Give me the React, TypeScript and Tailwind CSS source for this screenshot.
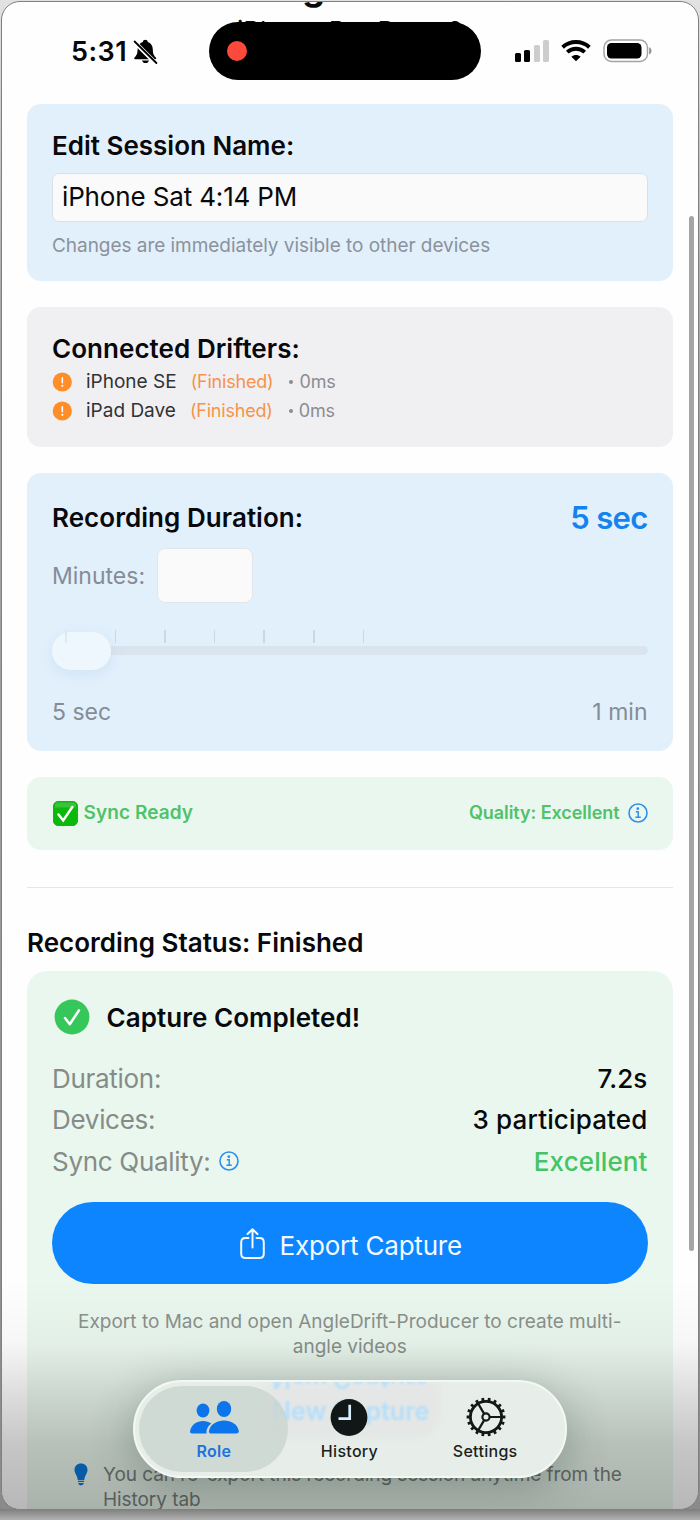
import React from "react";

const drifters = [
  { name: "iPhone SE", state: "(Finished)", offset: "0ms" },
  { name: "iPad Dave", state: "(Finished)", offset: "0ms" },
];

const ticks = [0, 1, 2, 3, 4, 5, 6];
const teeth = Array.from({ length: 18 }, (_, i) => i * 20);

const InfoIcon = () => (
  <svg width="20" height="20" viewBox="0 0 20 20" fill="none" stroke="#2f8fec">
    <circle cx="10" cy="10" r="9" strokeWidth="1.6" />
    <circle cx="9.8" cy="5.700" r="1.4" fill="#2f8fec" stroke="none" />
    <path d="M7.800 8.800h2.400v5.200M7.400 14.300h5.400" strokeWidth="1.5" />
  </svg>
);

const WarningIcon = () => (
  <svg width="20" height="20" viewBox="0 0 20 20">
    <circle cx="10.300" cy="10" r="9.600" fill="#ff8d28" />
    <path d="M10.300 5.800v5" stroke="#fff" strokeWidth="1.600" strokeLinecap="round" />
    <circle cx="10.300" cy="13.800" r="1.100" fill="#fff" />
  </svg>
);

const StatusBar = () => (
  <div className="relative h-[102px]">
    <div className="absolute left-0 right-0 top-[-33px] text-center text-[36px] leading-[36px] font-bold">
      <span className="relative left-[-36.500px]">g</span>
    </div>
    <div className="absolute left-0 right-0 top-[13px] text-center text-[26px] leading-[32px] whitespace-nowrap">
      iPhone Pro Dave 2
    </div>
    <div className="relative flex h-full items-start">
      <div className="ml-[69px] mt-[34px] w-[60px] text-[27px] leading-[32px] font-semibold tracking-[0.5px] whitespace-nowrap">
        5:31
      </div>
      <svg className="ml-[2px] mt-[36px]" width="26" height="28" viewBox="0 0 26 28">
        <path
          d="M12.500 1.800c-1.500 0-2.500.9-2.700 2.200C6.500 5 4.700 7.600 4.600 11.300c-.1 4.400-.8 6-3 8.200-.7.700-.5 1.800.8 1.800h19.600c1.300 0 1.600-1.100.8-1.800-2.200-2.200-2.900-3.800-3-8.200-.1-3.700-1.900-6.300-5-7.300-.2-1.300-1.200-2.200-2.300-2.200zM9 22.500h7c-.5 1.700-1.800 2.600-3.500 2.600S9.500 24.200 9 22.500z"
          fill="#000"
        />
        <path d="M2 4.500l20.500 20.500" stroke="#fff" strokeWidth="4.400" />
        <path d="M1.600 3.500l21.800 21.500" stroke="#000" strokeWidth="1.800" strokeLinecap="round" />
      </svg>
      <div className="ml-[49.500px] mt-[20px] flex h-[57.500px] w-[272.500px] items-center rounded-full bg-black pl-[18px]">
        <div className="h-5 w-5 rounded-full bg-[#fb4a3b]" />
      </div>
      <div className="ml-[33.500px] mt-[38px] flex h-[22px] w-[35px] items-end justify-between">
        <div className="h-[9px] w-[6px] rounded-[1.500px] bg-black" />
        <div className="h-[12px] w-[6px] rounded-[1.500px] bg-black" />
        <div className="h-[17px] w-[6px] rounded-[1.500px] bg-[#cdcdcd]" />
        <div className="h-[22px] w-[6px] rounded-[1.500px] bg-[#cdcdcd]" />
      </div>
      <svg className="ml-[11px] mt-[37px]" width="30" height="23" viewBox="0 0 30 23" fill="none" stroke="#000">
        <path d="M1.600 8.200C9.100 1.300 20.900 1.300 28.400 8.200" strokeWidth="3.900" />
        <path d="M6.300 13.200c4.900-4.600 12.500-4.600 17.400 0" strokeWidth="3.800" />
        <path d="M15 22.300l-4.600-4.600c2.600-2.300 6.600-2.300 9.200 0z" fill="#000" stroke="none" />
      </svg>
      <svg className="ml-[12px] mt-[37px]" width="50" height="24" viewBox="0 0 50 24">
        <rect x="1" y="1" width="43.500" height="21.500" rx="7.500" fill="none" stroke="#a3a3a3" strokeWidth="1.500" />
        <rect x="4" y="4" width="34.500" height="15.500" rx="4.500" fill="#000" />
        <path d="M46.200 8.200c3 1.200 3 6 0 7.200z" fill="#8e8e8e" />
      </svg>
    </div>
  </div>
);

const Slider = () => (
  <div className="relative mt-[27.500px] h-[42px]">
    <div className="absolute left-0 right-0 top-[15px] h-[9px] rounded-full bg-[#dae4ee]" />
    <div className="absolute left-[-0.500px] top-[1px] h-[38px] w-[59px] rounded-full bg-[#eff7fe] shadow-[0_4px_14px_rgba(90,130,180,0.12)]" />
    <div className="absolute left-[13px] top-[-0.500px] flex gap-[48px]">
      {ticks.map((t) => (
        <div key={t} className={t === 0 ? "h-[13px] w-[1.600px] bg-[#dfe7ef]" : "h-[13px] w-[1.600px] bg-[#ccd7e2]"} />
      ))}
    </div>
  </div>
);

const SettingsIcon = () => (
  <svg className="ml-[2px]" width="40" height="40" viewBox="0 0 40 40" fill="none" stroke="#151816">
    <circle cx="20" cy="20" r="15.600" strokeWidth="2.800" />
    {teeth.map((a) => (
      <path key={a} d="M20 .6v3.400" strokeWidth="2.800" transform={`rotate(${a + 10} 20 20)`} />
    ))}
    <circle cx="20" cy="20" r="3.600" strokeWidth="2.200" />
    <path d="M23.600 20h12M18.200 16.900L12 6.400M18.200 23.100L12 33.600" strokeWidth="2.200" />
  </svg>
);

const TabBar = () => (
  <div className="absolute left-[131px] top-[1378px] h-[98px] w-[434px] overflow-hidden rounded-full border-2 border-[#f3f8f4] bg-[#e7eee9] shadow-[0_8px_44px_rgba(30,50,40,0.3)]">
    <div className="absolute left-[130px] top-0 h-[56px] w-[176px] rounded-br-[24px] bg-[#e4e7e5] blur-[3px]" />
    <div className="absolute left-[137px] top-[-17px] -scale-y-100 text-[25px] leading-[28px] font-semibold whitespace-nowrap text-[#b9dffa] blur-[1px]">
      New Capture
    </div>
    <div className="absolute left-[137px] top-[15px] text-[25px] leading-[28px] font-semibold whitespace-nowrap text-[#b4defc] blur-[1px]">
      New Capture
    </div>
    <div className="absolute left-[4px] top-[4px] h-[86px] w-[149px] rounded-full bg-[#cbd4ce]/80" />
    <div className="relative grid h-full grid-cols-3 pl-[11px] pr-[12px] text-[16px] leading-[20px] font-medium tracking-[0.3px] text-[#1b1f1d]">
      <div className="flex flex-col items-center pt-[17px] text-[#1c72de]">
        <svg className="ml-[1px]" width="50" height="36" viewBox="0 0 50 36" fill="#0c75ec">
          <ellipse cx="14" cy="11.500" rx="6.400" ry="7" />
          <ellipse cx="35" cy="10" rx="7.200" ry="8" />
          <path d="M3.500 34.500C1.300 34.500.8 33.300 1.100 32 2.300 25.500 8 22 14 22c3.200 0 6 .9 8.300 2.400-3.300 2.500-5.300 6.100-4.700 10.100z" />
          <path d="M22.500 34.500c-2.200 0-2.900-1.300-2.500-2.800 1.500-6.500 8-10.200 15-10.200s13.500 3.700 14.800 10.200c.3 1.500-.4 2.800-2.500 2.800z" />
        </svg>
        <div className="mt-[6px] font-semibold">Role</div>
      </div>
      <div className="flex flex-col items-center pt-[16px]">
        <svg width="38" height="38" viewBox="0 0 38 38">
          <circle cx="19" cy="19.500" r="18.400" fill="#111617" />
          <path d="M8.500 20.600h11.200V6.800" stroke="#d8eefc" strokeWidth="2.700" fill="none" />
        </svg>
        <div className="mt-[5px]">History</div>
      </div>
      <div className="flex flex-col items-center pt-[15px]">
        <SettingsIcon />
        <div className="mt-[4px]">Settings</div>
      </div>
    </div>
  </div>
);

const App = () => {
  return (
    <div className="relative h-[1520px] w-[700px] overflow-hidden bg-gradient-to-b from-[#e2e2e2] from-0% via-[#a9a9a9] via-20% to-[#8a8a8a] to-100% font-['Inter',sans-serif] text-[#08090c]">
      <div className="absolute bottom-0 left-0 h-[11px] w-full bg-gradient-to-b from-[#7e7e7e] to-[#b2b2b2]" />
      <div className="absolute left-[1px] top-[1px] h-[1509px] w-[698px] overflow-hidden rounded-[19px] border border-[#808080] bg-[#fefefe]">
        <StatusBar />
        <div className="flex flex-col pl-[25px] pr-[25.500px]">
          {/* session name */}
          <div className="h-[177px] rounded-[14px] bg-[#e2f0fc] px-[25px] pt-[26px]">
            <div className="text-[26px] leading-[32px] font-semibold whitespace-nowrap">Edit Session Name:</div>
            <div className="mt-[11px] flex h-[49px] items-center rounded-[7px] border-[1.500px] border-[#dcdfe5] bg-[#fafafa] pb-[2px] pl-[9px] text-[26px] tracking-[-0.15px] whitespace-nowrap">
              iPhone Sat 4:14 PM
            </div>
            <div className="mt-[12px] text-[19px] leading-[24px] tracking-[-0.04px] whitespace-nowrap text-[#8b929b]">
              Changes are immediately visible to other devices
            </div>
          </div>

          {/* drifters */}
          <div className="mt-[26px] h-[140px] rounded-[14px] bg-[#f0f0f3] px-[25px] pt-[26px]">
            <div className="text-[26px] leading-[32px] font-semibold tracking-[0.050px] whitespace-nowrap">Connected Drifters:</div>
            {drifters.map((d) => (
              <div key={d.name} className="mt-[4px] flex h-[25px] items-center text-[18px] leading-[24px] whitespace-nowrap">
                <WarningIcon />
                <span className="ml-[14px] text-[19px] text-[#323235]">{d.name}</span>
                <span className="ml-[14px] tracking-[-0.2px] text-[#f7934a]">{d.state}</span>
                <span className="ml-[16px] h-1 w-1 rounded-full bg-[#8c8c91]" />
                <span className="ml-[6px] tracking-[-0.1px] text-[#8c8c91]">{d.offset}</span>
              </div>
            ))}
          </div>

          {/* duration */}
          <div className="mt-[26px] h-[277.500px] rounded-[14px] bg-[#e2f0fc] px-[25px] pt-[27px]">
            <div className="flex h-[36px] items-center justify-between whitespace-nowrap">
              <span className="text-[26px] leading-[34px] font-semibold tracking-[0.050px]">Recording Duration:</span>
              <span className="text-[31px] leading-[36px] font-semibold tracking-[-0.7px] text-[#1583ee]">5 sec</span>
            </div>
            <div className="mt-[12px] flex h-[55px] items-center">
              <span className="mt-[2px] w-[105px] text-[23px] whitespace-nowrap text-[#858c96]">Minutes:</span>
              <div className="h-[55px] w-[96px] rounded-[8px] border-[1.500px] border-[#e2e5ea] bg-[#fafafa]" />
            </div>
            <Slider />
            <div className="mt-[23px] flex justify-between text-[23px] leading-[32px] whitespace-nowrap text-[#858c96]">
              <span>5 sec</span>
              <span>1 min</span>
            </div>
          </div>

          {/* sync */}
          <div className="mt-[26px] flex h-[73px] items-center rounded-[14px] bg-[#eaf7ee] px-[25px] text-[19px] font-semibold whitespace-nowrap text-[#4fc26b]">
            <svg className="ml-[0.500px]" width="25" height="25" viewBox="0 0 25 25">
              <rect x=".5" y=".5" width="24" height="24" rx="4.500" fill="#0bb90b" stroke="#3b9a3b" />
              <path d="M2 4c0-1.500 1-2.500 2.500-2.500h16c1.500 0 2.500 1 2.500 2.500v2.500H2z" fill="#4bc84b" opacity=".7" />
              <path d="M5.500 13.500l4.700 6L19.300 6" stroke="#fff" strokeWidth="2.500" fill="none" strokeLinecap="round" />
            </svg>
            <span className="ml-[6px] tracking-[0.080px]">Sync Ready</span>
            <span className="ml-auto mr-[8px] text-[18px] leading-[26px] tracking-[-0.06px]">Quality: Excellent</span>
            <InfoIcon />
          </div>

          <div className="mt-[37.500px] h-px bg-[#e6e6e8]" />

          <div className="mt-[39px] text-[26px] leading-[32px] font-semibold whitespace-nowrap">Recording Status: Finished</div>

          {/* capture result */}
          <div className="mt-[12px] h-[560px] rounded-t-[20px] bg-[#eaf7ee] px-[25px] pt-[27px]">
            <div className="flex h-[37px] items-center">
              <svg className="ml-[2px]" width="36" height="36" viewBox="0 0 36 36">
                <circle cx="18" cy="18" r="17.400" fill="#35c759" />
                <path d="M11 19l4.800 6.200L25 11.300" stroke="#fff" strokeWidth="2.500" fill="none" strokeLinecap="round" strokeLinejoin="round" />
              </svg>
              <span className="ml-[16.500px] mt-[1px] text-[26px] font-semibold tracking-[0.050px] whitespace-nowrap">Capture Completed!</span>
            </div>
            <div className="mt-[22.500px] flex flex-col text-[26px] leading-[41.500px] tracking-[-0.3px] whitespace-nowrap text-[#858c88]">
              <div className="flex justify-between">
                <span>Duration:</span>
                <span className="font-medium tracking-[0.150px] text-[#08090c]">7.2s</span>
              </div>
              <div className="flex justify-between">
                <span>Devices:</span>
                <span className="font-medium tracking-[0.150px] text-[#08090c]">3 participated</span>
              </div>
              <div className="flex items-center">
                <span className="mr-[8px]">Sync Quality:</span>
                <InfoIcon />
                <span className="ml-auto font-medium tracking-[0.100px] text-[#44c465]">Excellent</span>
              </div>
            </div>
            <div className="mt-[20px] flex h-[82px] items-center justify-center gap-[15px] rounded-[41px] bg-[#0d85ff] pt-[4px] pl-[2px] text-[26px] tracking-[-0.2px] whitespace-nowrap text-[#f3f9ff]">
              <svg className="-mt-[3px]" width="25" height="31" viewBox="0 0 25 31" fill="none" stroke="#f3f9ff" strokeWidth="2" strokeLinecap="round" strokeLinejoin="round">
                <path d="M8.500 10H5.500C3 10 1.200 11.700 1.200 14.200v11.500C1.200 28.300 3 30 5.500 30h14c2.500 0 4.300-1.700 4.300-4.300V14.200C23.800 11.700 22 10 19.500 10h-3M12.500 19.500V1.500M7.500 6l5-4.800 5 4.800" />
              </svg>
              <span>Export Capture</span>
            </div>
            <div className="mt-[25px] text-center text-[19px] leading-[25px] whitespace-nowrap text-[#8a918c]">
              Export to Mac and open AngleDrift-Producer to create multi-
              <br />
              angle videos
            </div>
            <div className="mt-[103px] flex items-start pl-[22px] text-[19px] leading-[25px] tracking-[-0.06px] whitespace-nowrap text-[#7a827d]">
              <svg className="mt-[1px]" width="14" height="23" viewBox="0 0 14 23" fill="#0a78dc">
                <path d="M7 .5C3.200.5.500 3.200.500 6.800c0 3.600 2.500 5 3 9.200.1.600.4.900.9.900h5.200c.5 0 .8-.3.900-.9.500-4.200 3-5.600 3-9.200C13.500 3.200 10.800.5 7 .5zM3.900 17.800h6.200v1.300H3.900zM4.100 19.900h5.800c-.4 1.600-1.500 2.400-2.900 2.400s-2.500-.8-2.900-2.400z" />
              </svg>
              <div className="ml-[15px]">
                You can re-export this recording session anytime from the
                <br />
                History tab
              </div>
            </div>
          </div>
        </div>

        {/* dimming under the tab bar */}
        <div className="absolute bottom-0 left-0 h-[230px] w-full bg-[linear-gradient(to_bottom,rgba(0,0,0,0)_0%,rgba(0,0,0,0.03)_28%,rgba(0,0,0,0.12)_48%,rgba(0,0,0,0.22)_72%,rgba(0,0,0,0.28)_100%)]" />
        <div className="absolute right-[4px] top-[214px] h-[1035px] w-[5px] rounded-full bg-[#a5a5a5]" />
        <TabBar />
      </div>
    </div>
  );
};

export default App;
